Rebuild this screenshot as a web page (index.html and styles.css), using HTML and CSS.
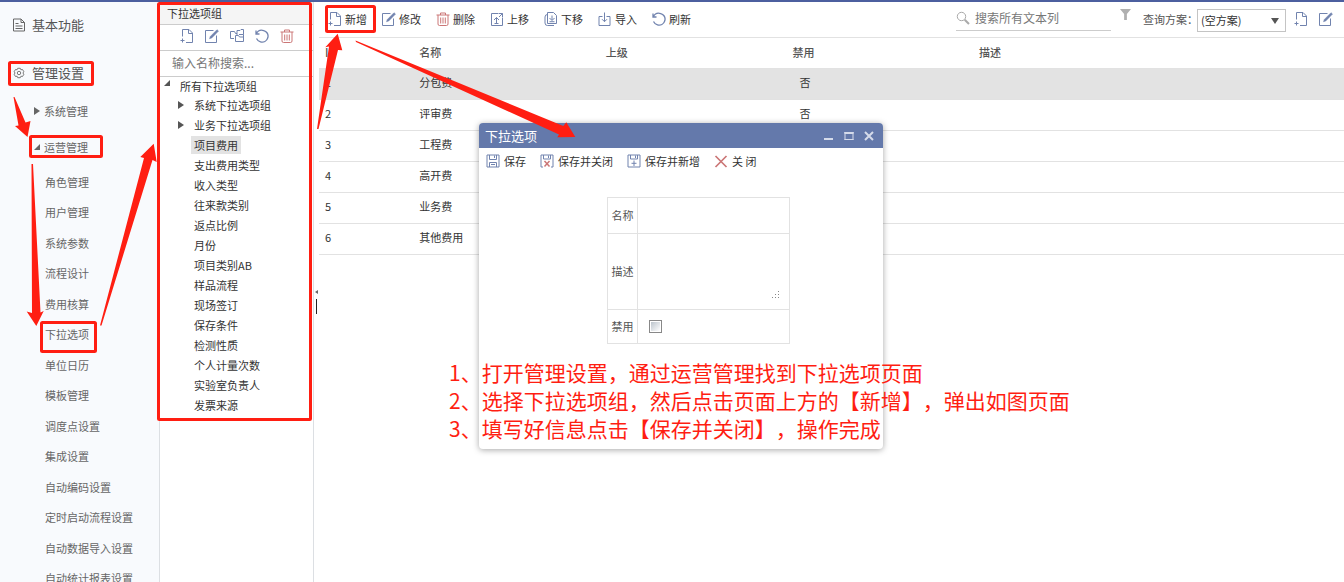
FILE: index.html
```html
<!DOCTYPE html>
<html lang="zh-CN">
<head>
<meta charset="utf-8">
<title>下拉选项</title>
<link rel="stylesheet" href="styles.css">
</head>
<body>
<svg class="defs" aria-hidden="true">
  <symbol id="i-add" viewBox="0 0 14 14"><path d="M2.500 7.500V.5H9L12.500 4V13.500H6M8.500.5V4.500H12.500M2.500 9.500V13.500M.5 11.500H4.500"/></symbol>
  <symbol id="i-edit" viewBox="0 0 14 14"><path d="M8.500 1.500H.5V13.500H11.500V6.500"/><path d="M4.500 9.700L5.300 7.500L12 .7L13.500 2.100L6.800 8.900Z" fill="currentColor" stroke-width=".5"/></symbol>
  <symbol id="i-del" viewBox="0 0 14 14"><path d="M.5 3H13.500M4.500 3V1H9.500V3M2 3V12Q2 13.500 3.500 13.500H10.500Q12 13.500 12 12V3M4.700 5.500V11.500M7 5.500V11.500M9.300 5.500V11.500"/></symbol>
  <symbol id="i-up" viewBox="0 0 14 14"><path d="M8 1.500H1.500V13.500H12.500V6M8.500 1.500H12.500V5.500M9 5L12.500 1.500M6.500 11V5.500M4 8L6.500 5.500L9 8M4.500 11.500H8.500"/></symbol>
  <symbol id="i-down" viewBox="0 0 14 14"><path d="M3.500.5H9.500L12.500 3.500V11.500H3.500ZM3.500 2.500Q1 2.500 1 5V11Q1 13.500 3.500 13.500H10M8 3.500V8M5.500 6L8 8.500L10.500 6M5.500 9.700H10.500"/></symbol>
  <symbol id="i-import" viewBox="0 0 14 14"><path d="M4.500 4.500H1V13.500H12V4.500H8.500M6.500.5V9.500M4 7.200L6.500 9.700L9 7.200"/></symbol>
  <symbol id="i-refresh" viewBox="0 0 14 14"><path d="M1 1.500V5H4.500M1.300 4.800C3 1.500 6.200.7 8.700 1.600C12 2.800 13.600 5.700 12.800 8.800C11.700 12.300 8.500 13.800 5.500 12.900C3.800 12.400 2.300 11.200 1.500 9.500" stroke-width="1.300"/></symbol>
  <symbol id="i-copy" viewBox="0 0 14 14"><path d="M4 9.500H.5V2.500H4.500L5.500 4.500H7M7 6V1.500H10L11 .5H13.500V5.500H9M5.500 12.500V6.500H8.500L9.500 8H13.500V12.500ZM13.500 5.500V8"/></symbol>
  <symbol id="i-save" viewBox="0 0 14 14"><path d="M1 1H13V13H1ZM3.500 1V5.500H10.500V1M8.500 1.500V4M3.500 13V8.500H10.500V13M5 10.500H9"/></symbol>
  <symbol id="i-saveclose" viewBox="0 0 14 14"><path d="M3 13H1V1H13V13H11M3.500 1V5H10.500V1M8.500 1.500V4"/><path class="red" d="M4.500 7L9.500 12.500M9.500 7L4.500 12.500" stroke-width="1.500"/></symbol>
  <symbol id="i-savenew" viewBox="0 0 14 14"><path d="M1 1H13V13H1ZM3.500 1V5H10.500V1M8.500 1.500V4M7 6.500V12M4.500 9.300H9.500"/></symbol>
  <symbol id="i-x" viewBox="0 0 14 14"><path d="M1.500 2L12.500 13M12.500 2L1.500 13" stroke-width="1.700"/></symbol>
</svg>

<div class="app">
  <nav class="sidebar">
    <a class="section" href="#"><svg class="doc" viewBox="0 0 14 14"><path d="M1.500 1H9L12.500 4.500V13H1.500ZM9 1V4.500H12.500M3.500 5.500H6.500M3.500 8H10.500M3.500 10.500H10.500"/></svg>基本功能</a>
    <a class="section" href="#"><svg class="gear" viewBox="0 0 14 14"><path d="M5.500 1.500H8.500L9.200 3.200L11.200 3L12.700 5.600L11.500 7L12.700 8.400L11.200 11L9.200 10.800L8.500 12.500H5.500L4.800 10.800L2.800 11L1.300 8.400L2.500 7L1.300 5.600L2.800 3L4.800 3.200Z"/><circle cx="7" cy="7" r="2"/></svg>管理设置</a>
    <a class="group" href="#"><svg viewBox="0 0 8 8"><path d="M1 0L7 4L1 8Z"/></svg>系统管理</a>
    <a class="group" href="#"><svg viewBox="0 0 8 8"><path d="M7 1V7H1Z"/></svg>运营管理</a>
    <ul class="links">
      <li><a href="#">角色管理</a></li>
      <li><a href="#">用户管理</a></li>
      <li><a href="#">系统参数</a></li>
      <li><a href="#">流程设计</a></li>
      <li><a href="#">费用核算</a></li>
      <li><a href="#">下拉选项</a></li>
      <li><a href="#">单位日历</a></li>
      <li><a href="#">模板管理</a></li>
      <li><a href="#">调度点设置</a></li>
      <li><a href="#">集成设置</a></li>
      <li><a href="#">自动编码设置</a></li>
      <li><a href="#">定时启动流程设置</a></li>
      <li><a href="#">自动数据导入设置</a></li>
      <li><a href="#">自动统计报表设置</a></li>
    </ul>
  </nav>

  <section class="panel">
    <h2>下拉选项组</h2>
    <div class="panel-tools">
      <button aria-label="新增"><svg class="icon"><use href="#i-add"/></svg></button>
      <button aria-label="修改"><svg class="icon"><use href="#i-edit"/></svg></button>
      <button aria-label="复制"><svg class="icon"><use href="#i-copy"/></svg></button>
      <button aria-label="刷新"><svg class="icon"><use href="#i-refresh"/></svg></button>
      <button aria-label="删除"><svg class="icon red"><use href="#i-del"/></svg></button>
    </div>
    <input class="panel-search" type="text" aria-label="输入名称搜索" placeholder="输入名称搜索...">
    <ul class="tree">
      <li class="root"><svg viewBox="0 0 8 8"><path d="M7 1V7H1Z"/></svg><span>所有下拉选项组</span></li>
      <li><svg viewBox="0 0 8 8"><path d="M1 0L7 4L1 8Z"/></svg><span>系统下拉选项组</span></li>
      <li><svg viewBox="0 0 8 8"><path d="M1 0L7 4L1 8Z"/></svg><span>业务下拉选项组</span></li>
      <li class="leaf"><span class="selected">项目费用</span></li>
      <li class="leaf"><span>支出费用类型</span></li>
      <li class="leaf"><span>收入类型</span></li>
      <li class="leaf"><span>往来款类别</span></li>
      <li class="leaf"><span>返点比例</span></li>
      <li class="leaf"><span>月份</span></li>
      <li class="leaf"><span>项目类别AB</span></li>
      <li class="leaf"><span>样品流程</span></li>
      <li class="leaf"><span>现场签订</span></li>
      <li class="leaf"><span>保存条件</span></li>
      <li class="leaf"><span>检测性质</span></li>
      <li class="leaf"><span>个人计量次数</span></li>
      <li class="leaf"><span>实验室负责人</span></li>
      <li class="leaf"><span>发票来源</span></li>
    </ul>
  </section>

  <div class="splitter"><i class="collapse"></i><i class="handle"></i></div>

  <main class="main">
    <div class="toolbar">
      <div class="actions">
        <button><svg class="icon"><use href="#i-add"/></svg>新增</button>
        <button><svg class="icon"><use href="#i-edit"/></svg>修改</button>
        <button><svg class="icon red"><use href="#i-del"/></svg>删除</button>
        <button><svg class="icon"><use href="#i-up"/></svg>上移</button>
        <button><svg class="icon"><use href="#i-down"/></svg>下移</button>
        <button><svg class="icon"><use href="#i-import"/></svg>导入</button>
        <button><svg class="icon"><use href="#i-refresh"/></svg>刷新</button>
      </div>
      <div class="search">
        <svg class="lens" viewBox="0 0 14 14"><circle cx="5.500" cy="5.500" r="4.200"/><path d="M8.700 8.700L13 13" stroke-width="2"/></svg>
        <input type="text" aria-label="搜索所有文本列" placeholder="搜索所有文本列">
      </div>
      <svg class="funnel" viewBox="0 0 12 12"><path d="M0 0H12L7.500 5.500V12H4.500V5.500Z"/></svg>
      <label for="plan">查询方案：</label>
      <span class="select"><select id="plan"><option>(空方案)</option></select></span>
      <div class="plan-tools">
        <button aria-label="新增方案"><svg class="icon"><use href="#i-add"/></svg></button>
        <button aria-label="修改方案"><svg class="icon"><use href="#i-edit"/></svg></button>
      </div>
    </div>
    <table class="grid">
      <thead><tr><th class="c-id">ID</th><th class="c-name">名称</th><th class="c-name">上级</th><th class="c-name">禁用</th><th>描述</th></tr></thead>
      <tbody>
        <tr class="current"><td>1</td><td>分包费</td><td></td><td class="flag">否</td><td></td></tr>
        <tr><td>2</td><td>评审费</td><td></td><td class="flag">否</td><td></td></tr>
        <tr><td>3</td><td>工程费</td><td></td><td class="flag">否</td><td></td></tr>
        <tr><td>4</td><td>高开费</td><td></td><td class="flag">否</td><td></td></tr>
        <tr><td>5</td><td>业务费</td><td></td><td class="flag">否</td><td></td></tr>
        <tr><td>6</td><td>其他费用</td><td></td><td class="flag">否</td><td></td></tr>
      </tbody>
    </table>
  </main>
</div>

<div class="dialog" role="dialog" aria-labelledby="dialog-title">
  <header>
    <h3 id="dialog-title">下拉选项</h3>
    <button aria-label="最小化"><svg viewBox="0 0 10 10"><path d="M0 8H9"/></svg></button>
    <button aria-label="最大化"><svg viewBox="0 0 10 10"><path d="M.5 1.500H9.500M1 1V9M9 1V9M.5 8.500H9.500" stroke-width="1"/><path d="M.5 2H9.500"/></svg></button>
    <button aria-label="关闭"><svg viewBox="0 0 10 10"><path d="M1 1L9 9M9 1L1 9"/></svg></button>
  </header>
  <div class="dialog-tools">
    <button><svg class="icon"><use href="#i-save"/></svg>保存</button>
    <button><svg class="icon"><use href="#i-saveclose"/></svg>保存并关闭</button>
    <button><svg class="icon"><use href="#i-savenew"/></svg>保存并新增</button>
    <button><svg class="icon red"><use href="#i-x"/></svg>关 闭</button>
  </div>
  <form class="form">
    <label for="f-name">名称</label>
    <div class="field"><input id="f-name" type="text"></div>
    <label for="f-desc">描述</label>
    <div class="field"><textarea id="f-desc"></textarea><svg class="grip" viewBox="0 0 9 9"><path d="M7 0h1v1h-1zM4 3h1v1h-1zM7 3h1v1h-1zM1 6h1v1h-1zM4 6h1v1h-1zM7 6h1v1h-1z"/></svg></div>
    <label for="f-off">禁用</label>
    <div class="field"><input id="f-off" type="checkbox"></div>
  </form>
</div>

<svg class="marks" aria-hidden="true">
  <g class="boxes">
    <rect x="9.500" y="62.500" width="83" height="22" rx="1"/>
    <rect x="30.500" y="136.500" width="71" height="20" rx="1"/>
    <rect x="41.500" y="322.500" width="54" height="29" rx="1"/>
    <rect x="158.500" y="3.500" width="152" height="416" rx="1"/>
    <rect x="326.500" y="6.500" width="48" height="25" rx="1"/>
  </g>
  <path d="M13.500 97L14.500 97L25.500 122.500L30.500 121L27.500 137L15 126L18.500 125.500Z"/>
  <path d="M31.500 164H33L40.500 312.500L43.700 311L36.300 326L26.700 311.500L32 313Z"/>
  <path d="M100 325.500L144 158L140.300 157L153.700 143.700L156.700 162L152.500 160L101.500 325.500Z"/>
  <path d="M317 129L329 46.500L325.300 47.300L337.700 33.700L342.300 50.300L338 50L318.500 129Z"/>
  <path d="M355.500 40.500L356 42L559 134.500L557.300 137.300L575.300 137L566.300 122.300L563.300 126Z"/>
</svg>
<ol class="notes">
  <li>1、打开管理设置，通过运营管理找到下拉选项页面</li>
  <li>2、选择下拉选项组，然后点击页面上方的【新增】，弹出如图页面</li>
  <li>3、填写好信息点击【保存并关闭】，操作完成</li>
</ol>
</body>
</html>
```
FILE: styles.css
```css
* { box-sizing: border-box; }
html, body { height: 100%; }
body {
  margin: 0;
  overflow: hidden;
  background: #fff;
  color: #333;
  font: 11px/20px "Noto Sans CJK SC", "Noto Sans", sans-serif;
  text-spacing-trim: space-all;
}
ul, ol { list-style: none; margin: 0; padding: 0; }
a { color: inherit; text-decoration: none; }
h2, h3 { margin: 0; font-weight: 400; }
button, input, select, textarea { font: inherit; color: inherit; border: 0; margin: 0; padding: 0; background: none; outline: none; }
button { display: flex; align-items: center; gap: 3px; white-space: nowrap; }
svg { flex: none; }
.defs { position: absolute; width: 0; height: 0; }
.icon { width: 14px; height: 14px; fill: none; stroke: currentColor; color: #7183ae; }
.icon.red { color: #cb7676; }
path.red { stroke: #cb7676; }

.app { display: flex; height: 100%; border-top: 2px solid #4c5f9f; }

/* Navigation */
.sidebar { flex: none; width: 160px; padding-top: 6px; overflow: hidden; background: #f8fafd; border-right: 1px solid #dcdfe3; color: #666; }
.section { display: flex; align-items: center; height: 34px; margin-bottom: 14px; padding-left: 12px; gap: 6px; font-size: 13px; color: #555; }
.section svg { width: 14px; height: 14px; fill: none; stroke: #666; }
.section .gear { width: 12px; height: 12px; margin: 0 1px; }
.group { display: flex; align-items: center; height: 36px; padding-left: 33px; gap: 3px; }
.section + .group { margin-top: -11px; }
.group svg { width: 8px; height: 8px; fill: #666; }
.links { padding-top: 2px; }
.links li { height: 30px; padding-left: 45px; line-height: 30px; white-space: nowrap; }
.links li:nth-child(even) { height: 31px; }

/* Option groups */
.panel { flex: none; width: 154px; border-right: 1px solid #dcdfe3; background: #fff; }
.panel h2 { height: 23px; padding-left: 7px; border-bottom: 1px solid #ccc; background: #f5f5f5; font-size: 11px; line-height: 22px; }
.panel-tools { display: flex; align-items: center; justify-content: flex-end; gap: 11px; height: 26px; padding: 0 19px 4px 0; border-bottom: 1px solid #ccc; }
.panel-tools .icon { display: block; }
.panel-search { display: block; width: 100%; height: 26px; padding: 0 0 2px 12px; border-bottom: 1px solid #ccc; font-size: 12px; }
::placeholder { color: #777; opacity: 1; }
.tree li { display: flex; align-items: center; height: 20px; padding-left: 17px; gap: 6px; white-space: nowrap; }
.tree .root { height: 18px; padding-left: 3px; gap: 6px; }
.tree .root svg { margin-bottom: 6px; }
.tree .leaf { padding-left: 31px; }
.tree svg { width: 8px; height: 8px; fill: #555; }
.tree span { padding: 0 3px; line-height: 18px; }
.tree .selected { background: #e3e3e3; }

.splitter { display: flex; flex: none; flex-direction: column; align-items: center; justify-content: center; gap: 5px; width: 5px; padding-top: 20px; }
.collapse { border: 2px solid transparent; border-right: 3px solid #666; border-left: 0; }
.handle { width: 1px; height: 15px; background: #222; }

/* Records */
.main { flex: 1; min-width: 0; }
.toolbar { display: flex; align-items: center; height: 36px; padding: 0 11px 2px 9px; border-bottom: 1px solid #e2e2e2; }
.actions { display: flex; gap: 15px; margin-right: auto; }
.search { display: flex; align-items: center; gap: 5px; width: 155px; height: 24px; margin-right: 8px; border-bottom: 1px solid #ccc; }
.search input { width: 100%; min-width: 0; font-size: 12px; }
.lens { width: 14px; height: 14px; fill: none; stroke: #aaa; }
.funnel { width: 13px; height: 11px; margin: 0 11px 8px 0; fill: #b0b0b0; }
.toolbar label { width: 54px; white-space: nowrap; color: #555; }
.select { position: relative; width: 89px; height: 23px; margin-top: 3px; border: 1px solid #c4c4c4; }
.select::after { content: ""; position: absolute; top: 8px; right: 6px; border: 4px solid transparent; border-top: 6px solid #555; border-bottom: 0; pointer-events: none; }
.select select { display: block; width: 100%; height: 100%; padding: 0 0 1px 3px; appearance: none; }
.plan-tools { display: flex; gap: 11px; margin-left: 8px; }

.grid { width: 100%; border-collapse: collapse; table-layout: fixed; }
.grid th, .grid td { height: 31px; padding: 0 6px; border-bottom: 1px solid #e2e2e2; text-align: left; line-height: 20px; white-space: nowrap; }
.grid th { height: 30px; padding-bottom: 2px; font-weight: 500; color: #555; }
.grid td { padding-bottom: 3px; }
.grid .c-id { width: 9.2%; }
.grid .c-name { width: 18.2%; }
.grid td.flag { padding-left: 13px; }
.current { background: #e3e3e3; }

/* Edit dialog */
.dialog { position: absolute; top: 123px; left: 479px; width: 404px; padding-bottom: 105px; border-radius: 4px; background: #fff; box-shadow: 0 1px 6px rgba(0, 0, 0, .35); }
.dialog header { display: flex; align-items: center; gap: 10px; height: 25px; padding: 0 9px 0 6px; border-radius: 4px 4px 0 0; background: #6479ab; color: #fff; }
.dialog h3 { margin-right: auto; font-size: 13px; }
.dialog header svg { width: 10px; height: 10px; fill: none; stroke: #d5dbea; stroke-width: 2; }
.dialog-tools { display: flex; gap: 14px; padding: 3px 7px 5px; }
.dialog-tools button { gap: 4px; }
.form { display: grid; grid-template-columns: 29px 151px; grid-template-rows: 35px 75px 33px; gap: 1px; width: 183px; margin: 21px auto 0 128px; padding: 1px; background: #e2e2e2; color: #555; }
.form label, .field { display: flex; align-items: center; justify-content: center; padding-bottom: 1px; background: #fff; white-space: nowrap; }
.field { position: relative; justify-content: flex-start; padding-left: 11px; }
.field input[type="text"] { width: 130px; height: 24px; }
.field textarea { width: 130px; height: 56px; resize: none; }
.grip { position: absolute; right: 9px; bottom: 9px; width: 9px; height: 9px; fill: #888; }
.field input[type="checkbox"] { width: 13px; height: 13px; appearance: none; border: 1px solid #888; background: linear-gradient(135deg, #bcc4cc, #fff) content-box; padding: 1px; }

/* Guide drawn over the page */
.marks { position: absolute; top: 0; left: 0; width: 100%; height: 100%; fill: #ff1e12; pointer-events: none; }
.boxes { fill: none; stroke: #ff1e12; stroke-width: 3; }
.notes { position: absolute; top: 358px; left: 449px; color: #ff1e12; font-size: 21px; line-height: 28px; white-space: nowrap; pointer-events: none; }
```
